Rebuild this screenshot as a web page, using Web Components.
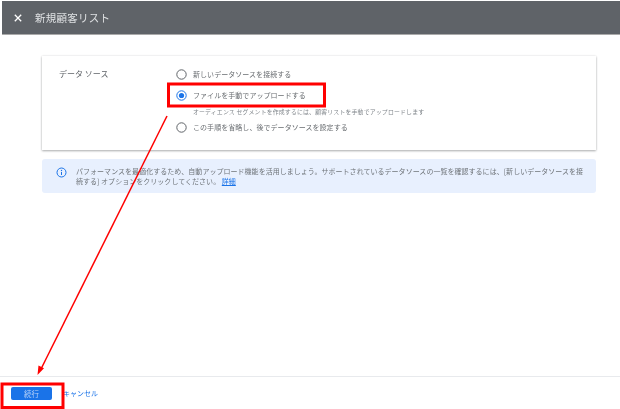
<!DOCTYPE html>
<html lang="ja">
<head>
<meta charset="utf-8">
<title>新規顧客リスト</title>
<style>
  html, body { margin: 0; height: 100%; background: #fff; }
  body { font-family: "Noto Sans CJK JP", "Noto Sans", sans-serif; overflow: hidden; }
</style>
</head>
<body>
<customer-list-page>
  <dialog-header slot="header">新規顧客リスト</dialog-header>
  <source-card>
    <source-option>新しいデータソースを接続する</source-option>
    <source-option checked hint="オーディエンス セグメントを作成するには、顧客リストを手動でアップロードします">ファイルを手動でアップロードする</source-option>
    <source-option>この手順を省略し、後でデータソースを設定する</source-option>
  </source-card>
  <info-note>パフォーマンスを最適化するため、自動アップロード機能を活用しましょう。サポートされているデータソースの一覧を確認するには、[新しいデータソースを接続する] オプションをクリックしてください。 <a>詳細</a></info-note>
  <dialog-footer slot="footer"></dialog-footer>
</customer-list-page>
<script>
class CustomerListPage extends HTMLElement {
  constructor() {
    super();
    this.attachShadow({ mode: "open" });
    this.shadowRoot.innerHTML = `
      <style>
        :host { display: flex; flex-direction: column; position: relative; width: 620px; height: 409px; overflow: hidden; background: #fff; filter: blur(.35px); }
        main { flex: 1; display: flex; flex-direction: column; gap: 9px; padding: 21px 24px 0 42px; }
        .marks { position: absolute; left: 0; top: 0; width: 620px; height: 409px; pointer-events: none; }
      </style>
      <slot name="header"></slot>
      <main><slot></slot></main>
      <slot name="footer"></slot>
      <svg class="marks" viewBox="0 0 620 409" fill="none">
        <rect x="168.500" y="84" width="156" height="22" stroke="#f00" stroke-width="3"/>
        <rect x="2" y="384" width="61" height="23.500" stroke="#f00" stroke-width="3"/>
        <path d="M167 116 L41 369" stroke="#f00" stroke-width="1.500"/>
        <path d="M37.500 375 L38.500 365.500 L44 368.300 Z" fill="#f00"/>
      </svg>
    `;
  }
}

class DialogHeader extends HTMLElement {
  constructor() {
    super();
    this.attachShadow({ mode: "open" });
    this.shadowRoot.innerHTML = `
      <style>
        :host { display: flex; align-items: center; height: 33px; margin: 1px 0 0 2px; padding-left: 11px; gap: 12px; background: #5f6368; color: #dfe1e3; font-size: 10.500px; letter-spacing: .25px; border-bottom: 1px solid #aaa; }
        svg { width: 10px; height: 10px; flex: none; }
      </style>
      <svg viewBox="0 0 10 10"><path d="M1.800 1.800 L8.200 8.200 M8.200 1.800 L1.800 8.200" stroke="#fff" stroke-width="1.300"/></svg>
      <slot></slot>
    `;
  }
}

class SourceCard extends HTMLElement {
  constructor() {
    super();
    this.attachShadow({ mode: "open" });
    this.shadowRoot.innerHTML = `
      <style>
        :host { display: grid; grid-template-columns: 117px 1fr; height: 94px; box-sizing: border-box; padding: 7.500px 0 0 17px; width: 554px; background: #fff; box-shadow: 0 1px 2px rgba(60,64,67,.4), 0 0 2px rgba(60,64,67,.12); color: #5f6368; }
        .label { font-size: 8px; line-height: 12px; margin-top: 4px; color: #5f6368; }
        .options { display: flex; flex-direction: column; }
      </style>
      <div class="label">データ ソース</div>
      <div class="options"><slot></slot></div>
    `;
  }
}

class SourceOption extends HTMLElement {
  constructor() {
    super();
    this.attachShadow({ mode: "open" });
    const on = this.hasAttribute("checked");
    this.shadowRoot.innerHTML = `
      <style>
        :host { display: block; }
        .row { display: flex; align-items: center; gap: 6px; height: 21px; font-size: 7px; letter-spacing: .05px; color: #6a6e72; }
        svg { width: 11px; height: 11px; flex: none; }
        .hint { font-size: 5.900px; line-height: 7px; margin: 2px 0 2px 17px; color: #80868b; white-space: nowrap; letter-spacing: .17px; }
      </style>
      <div class="row">
        <svg viewBox="0 0 11 11" fill="none">
          <circle cx="5.500" cy="5.500" r="4.700" stroke="${on ? "#1a73e8" : "#5f6368"}" stroke-width="1"/>
          ${on ? '<circle cx="5.500" cy="5.500" r="2.600" fill="#1a73e8"/>' : ""}
        </svg>
        <slot></slot>
      </div>
      ${on ? `<div class="hint">${this.getAttribute("hint")}</div>` : ""}
    `;
  }
}

class InfoNote extends HTMLElement {
  constructor() {
    super();
    this.attachShadow({ mode: "open" });
    this.shadowRoot.innerHTML = `
      <style>
        :host { display: flex; gap: 9.500px; width: 554px; height: 34px; box-sizing: border-box; padding: 7px 10px 0 13.500px; background: #e8f0fe; border-radius: 3px; color: #70757a; font-size: 7px; line-height: 10px; letter-spacing: .03px; }
        svg { width: 11px; height: 11px; flex: none; margin-top: 1px; }
        ::slotted(a) { color: #1a73e8; text-decoration: underline; }
      </style>
      <svg viewBox="0 0 11 11" fill="none">
        <circle cx="5.500" cy="5.500" r="4.500" stroke="#1a73e8" stroke-width="1"/>
        <path d="M5.500 5 V8" stroke="#1a73e8" stroke-width="1"/>
        <circle cx="5.500" cy="3.500" r=".7" fill="#1a73e8"/>
      </svg>
      <div><slot></slot></div>
    `;
  }
}

class DialogFooter extends HTMLElement {
  constructor() {
    super();
    this.attachShadow({ mode: "open" });
    this.shadowRoot.innerHTML = `
      <style>
        :host { display: flex; align-items: center; height: 32px; padding: 0 0 0 11px; gap: 11px; border-top: 1px solid #e8eaed; font-size: 7px; }
        button { width: 41px; height: 13px; padding: 0; border: 0; border-radius: 2px; background: #1a73e8; color: #b9d2f8; font: inherit; font-size: 7.500px; line-height: 13px; }
        span { color: #1a73e8; }
      </style>
      <button>続行</button>
      <span>キャンセル</span>
    `;
  }
}

customElements.define("customer-list-page", CustomerListPage);
customElements.define("dialog-header", DialogHeader);
customElements.define("source-card", SourceCard);
customElements.define("source-option", SourceOption);
customElements.define("info-note", InfoNote);
customElements.define("dialog-footer", DialogFooter);
</script>
</body>
</html>
